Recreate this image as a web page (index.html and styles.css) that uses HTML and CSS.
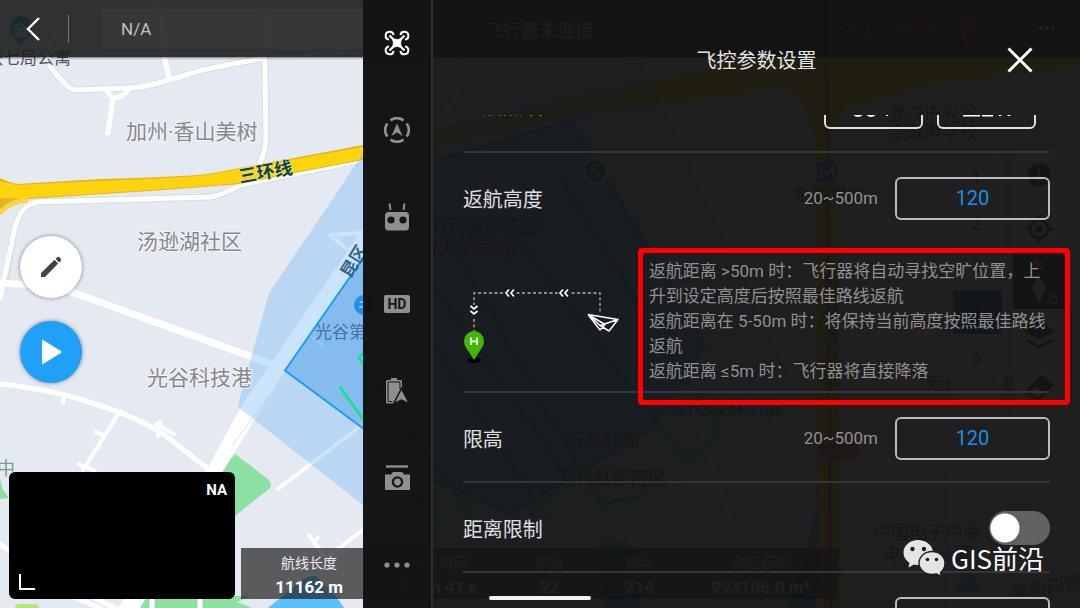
FILE: index.html
```html
<!DOCTYPE html>
<html lang="zh-CN">
<head>
<meta charset="utf-8">
<meta name="viewport" content="width=device-width, initial-scale=1">
<title>飞控参数设置</title>
<link rel="stylesheet" href="styles.css">
</head>
<body>
<div class="app">
  <svg class="map" viewBox="0 0 1080 608" preserveAspectRatio="xMinYMin slice" aria-hidden="true">
    <rect width="1080" height="608" fill="#e5eaf2"/>
    <!-- parks and water -->
    <g fill="#8ce0a3">
      <path d="M235 454L268 479Q272 484 270 488L235 516L205 490Z"/>
      <path d="M0 478L3 490L9 498L0 499Z"/>
      <path d="M125 608L140 596H250L225 608Z"/>
      <path d="M205 596Q225 600 240 603L252 608H215Z"/>
    </g>
    <path d="M268 608L302 580Q315 571 321 581L336 596L344 608Z" fill="#5ac0ff"/>
    <path d="M597 545Q618 535 640 550V608H605Z M816 485H825L822 550L815 608H785Q812 560 816 485Z M952 590L970 570L982 592L955 592Z" fill="#5ac0ff"/>
    <rect x="15" y="604" width="24" height="10" rx="4" fill="#b3e580"/>
    <!-- minor roads -->
    <g fill="none" stroke="#d8dce3" stroke-width="7" stroke-linecap="round" stroke-linejoin="round">
      <path d="M61 0L48 58Q50 68 56 74L66 85Q71 90 78 90L130 88Q150 86 169 80L202 70L264 58"/>
      <path d="M264 0L266 140Q264 156 260 162"/>
      <path d="M5 285L12 242Q17 204 38 202L210 197Q224 195 240 185L363 160"/>
    </g>
    <g fill="none" stroke="#fff" stroke-linecap="round" stroke-linejoin="round" stroke-width="5">
      <path d="M61 0L48 58Q50 68 56 74L66 85Q71 90 78 90L130 88Q150 86 169 80L202 70L264 58"/>
      <path d="M155 0Q161 8 161 25L165 60L169 78"/>
      <path d="M264 0L266 140Q264 156 260 162"/>
      <path d="M106 90L113 99L110 118L108 133M128 90Q124 97 113 99"/>
      <path d="M0 15Q35 3 68 0M265 56L363 53" stroke-width="2"/>
      <path d="M0 298L12 242Q17 204 38 202L210 197Q224 195 240 185L363 160"/>
      <path d="M0 283L55 286L94 300L272 364" stroke-width="7"/>
      <path d="M0 384Q55 390 92 403Q150 420 180 447L207 468"/>
      <path d="M64 394L63 403M120 411L83 470M96 432L103 435M79 464L95 471M160 422L158 436M156 424L174 434M98 448L99 446" stroke-width="4"/>
      <path d="M278 489L363 424M309 535L333 568M318 537L314 543M330 555L363 530" stroke-width="4"/>
      <path d="M0 544L12 553M72 596L100 608M90 596L115 608M152 596V608M200 596V608" stroke-width="5"/>
      <path d="M330 235L363 233M330 235L347 249M313 337L322 345" stroke-width="4"/>
      <path d="M466 0L460 80Q455 110 430 125M430 225Q500 300 560 270T650 240M430 410Q520 380 540 470M530 560Q600 520 700 525T860 475L1080 465M700 430L730 520M1000 150L1005 350M840 300L1000 285M950 475V608" stroke="#fff"/>
    </g>
    <!-- ring road -->
    <path d="M363 228L345 255L280 350L242 405L205 473L118 608H140L228 463L267 400L285 371L363 262Z" fill="#fff"/>
    <path d="M268 397L232 446" stroke="#dfe3ea" fill="none"/>
    <path d="M0 178Q8 182 17 184L100 179Q180 177 208 174L240 168L363 145L430 131L600 92L700 70L755 57H1080V66L930 85L850 108Q835 112 835 125L842 608H820L815 150Q808 90 780 88L700 100L560 118L430 147L363 160L300 172L240 184Q180 189 150 191L28 199Q10 203 0 215V205Z" fill="#e4b521"/>
    <path d="M0 181L17 185L100 181Q180 178 208 175L240 169L363 147L430 132L600 94L700 72L755 58H1080V65L930 84L850 107Q834 111 834 125L841 608H821L816 150Q808 89 780 87L700 99L560 117L430 146L363 159L300 171L240 183Q180 188 150 190L28 198L0 198Z" fill="#ffd30d"/>
    <path d="M0 213Q10 201 28 200" stroke="#f9d44a" stroke-width="5" fill="none"/>
    <path d="M826 0L831 608" stroke="#93619d" stroke-width="3"/>
    <!-- survey area -->
    <path d="M363 153L332 200L269 293L240 398L238 407L363 505L520 608L800 400L640 57Z" fill="#6cb5f5" fill-opacity=".36"/>
    <path d="M285 370.500L430 162L572 120L705 345L650 430L510 515L430 478Z" fill="#3b98ec" fill-opacity=".42" stroke="#1d9cf5" stroke-width="2"/>
    <path d="M340 387L363 419L440 525M364 352L359 358L480 530M430 280L570 480L530 515M430 205L600 505L645 495M480 190L690 465M560 180L720 430L690 460M430 340L550 520" stroke="#0ee28a" stroke-width="2.500" fill="none"/>
    <circle cx="595" cy="171" r="12" fill="#0aa861" stroke="#d8f1cf" stroke-width="3"/>
    <path d="M599 167Q595 164 592 167Q592 170 595 171Q599 172 599 175Q595 178 591 175" fill="none" stroke="#d8f1cf" stroke-width="2"/>
    <circle cx="364" cy="305" r="10" fill="#1d92ee"/>
    <path d="M360 302H364M359 307H364" stroke="#e5f4ff"/>
    <!-- place names -->
    <g class="place">
      <text x="126" y="139">加州·香山美树</text>
      <text x="137" y="249">汤逊湖社区</text>
      <text x="147" y="385">光谷科技港</text>
    </g>
    <g class="poi">
      <text class="poi-small" x="-14" y="64">铁七局公寓</text>
      <text class="poi-school" x="315" y="338">光谷第</text>
      <text class="poi-green" x="-3" y="475">中</text>
      <text class="road-name" transform="translate(240 183) rotate(-10)">三环线</text>
      <text class="road-blue" transform="translate(350 279) rotate(-58)">昆区</text>
      <text x="888" y="121">武汉市光谷</text><text x="888" y="139">金融港学校</text>
      <text x="793" y="201">金融港北</text><text x="430" y="233">万科城市花园</text>
      <text x="432" y="255">(大学园路)</text><text x="668" y="415">现代·森林小镇</text>
      <text x="567" y="447">万科红郡</text><text x="558" y="485">万科红郡南区</text>
      <text x="873" y="539">中国电子中原</text><text x="883" y="561">电子产业园</text>
      <text x="926" y="389">光谷金融港</text>
      <text transform="translate(1012 600) rotate(-10)">高新四路</text>
      <text x="822" y="294">光</text><text x="822" y="319">谷</text><text x="822" y="346">道</text><text x="822" y="367">高</text><text x="822" y="388">架</text>
    </g>
    <rect x="817" y="162" width="20" height="20" rx="5" fill="#2f6cd8"/>
    <path d="M821 178V167L827 174L833 167V178" fill="none" stroke="#fff" stroke-width="2"/>
    <rect x="816" y="444" width="44" height="15" rx="7" fill="#d85a68"/>
    <path d="M10 27a11 11 0 1 1 22 0q0 9-11 18q-11-9-11-18Z" fill="#07aebb"/>
    <path d="M14 28L20 23L26 28M16 28V34H25V28M19 34V29H22V34M27 30V34M14 36H28" fill="none" stroke="#fff" stroke-width="1.500"/>
    <!-- map tools -->
    <rect x="953" y="155" width="49" height="260" rx="4" fill="#f7f7f7" fill-opacity=".8"/>
    <rect x="953" y="290" width="49" height="44" fill="#2e62c0"/>
    <rect x="1013" y="150" width="53" height="265" rx="4" fill="#f7f7f7" fill-opacity=".8"/>
    <rect x="1013" y="255" width="53" height="54" fill="#333"/>
    <g fill="none" stroke="#333" stroke-width="3">
      <circle cx="1039" cy="175" r="10" fill="#333"/>
      <path d="M1039 169V171M1039 173V181" stroke="#fff"/>
      <circle cx="1039" cy="229" r="9"/><path d="M1039 215V220M1039 238V243M1025 229H1030M1048 229H1053"/><circle cx="1039" cy="229" r="2"/>
      <path d="M1027 331L1039 323L1052 331L1039 338Z" fill="#333"/><path d="M1027 340L1039 347L1052 340"/>
      <path d="M1027 392L1041 377L1052 385L1039 400Z"/><path d="M1034 384L1041 377L1052 385L1046 392Z" fill="#333"/>
      <path d="M1039 274L1046 288L1039 303L1032 288Z" fill="#fff" stroke="none"/>
      <path d="M1050 297H1057V303H1050ZM1051 297V293H1056V297" stroke="#ffd30d" stroke-width="1.500"/>
    </g>
    <g class="tool-num"><text x="971" y="184">1</text><text x="971" y="230">2</text><text x="971" y="273">3</text><text x="971" y="318">4</text><text x="971" y="364">5</text></g>
    <text class="north" x="1034" y="270">N</text>
  </svg>

  <main class="flight">
    <header class="topbar">
      <button class="back" aria-label="返回">
        <svg viewBox="0 0 16 26" width="16" height="26"><path d="M15 2L4 13L15 24" fill="none" stroke="#fff" stroke-width="2.400"/></svg>
      </button>
      <span class="bar-line"></span>
      <div class="mode">N/A</div>
      <div class="conn">飞行器未连接</div>
      <div class="signals">
        <span>✕ 0</span><span>RC ✕</span>
        <svg viewBox="0 0 16 28" width="16" height="28"><path d="M2 4H14V26H2ZM5 2H11M2 18L14 12" fill="none" stroke="#ff2d2d" stroke-width="2"/></svg>
      </div>
      <span class="more">•••</span>
    </header>
    <div class="actions">
      <button class="round round-edit" aria-label="编辑">
        <svg viewBox="0 0 24 24" width="24" height="24"><path d="M2 18L15.500 4.800L19.200 8.500L6 22H2ZM16.500 3.800L18 2.400Q19.400 1.200 20.800 2.600L21.600 3.400Q22.800 4.800 21.600 6L20.200 7.500Z" fill="#444"/></svg>
      </button>
      <button class="round round-play" aria-label="开始">
        <svg viewBox="0 0 24 26" width="24" height="26"><path d="M3 1.500Q3 .5 4 1L22 12Q23 13 22 14L4 25Q3 25.500 3 24.500Z" fill="#fff"/></svg>
      </button>
    </div>
    <div class="bottom">
      <section class="video">
        <span class="video-state">NA</span>
        <svg viewBox="0 0 16 16" width="16" height="16"><path d="M1 0V15H16" fill="none" stroke="#fff" stroke-width="2"/></svg>
      </section>
      <dl class="stats">
        <div><dt>航线长度</dt><dd>11162 m</dd></div>
        <div><dt>预计时间</dt><dd>25 m 41 s</dd></div>
        <div><dt>航点</dt><dd>22</dd></div>
        <div><dt>照片</dt><dd>214</dd></div>
        <div><dt>测区面积</dt><dd>993106.0 m²</dd></div>
      </dl>
    </div>
  </main>

  <aside class="drawer">
    <nav class="tabs">
      <button class="tab tab-on" aria-label="飞控参数设置">
        <svg viewBox="0 0 26 26" width="26" height="26" fill="none" stroke="currentColor">
          <path d="M5 9.600A4 4 0 1 1 9.600 5M21 9.600A4 4 0 1 0 16.400 5M5 16.400A4 4 0 1 0 9.600 21M21 16.400A4 4 0 1 1 16.400 21" stroke-width="2"/>
          <path d="M5.500 5.500L20.500 20.500M20.500 5.500L5.500 20.500" stroke-width="2.200"/>
          <path d="M8.500 8.500Q13 11 17.500 8.500Q15.500 13 17.500 17.500Q13 15 8.500 17.500Q10.500 13 8.500 8.500Z" fill="currentColor"/>
        </svg>
      </button>
      <button class="tab" aria-label="导航">
        <svg viewBox="0 0 26 26" width="26" height="26" fill="none" stroke="currentColor" stroke-width="2.600">
          <path d="M6.500 3.300A11.600 11.600 0 0 1 19.500 3.300M22.700 6.500A11.600 11.600 0 0 1 22.700 19.500M19.500 22.700A11.600 11.600 0 0 1 6.500 22.700M3.300 19.500A11.600 11.600 0 0 1 3.300 6.500"/>
          <path d="M13 6.500L18.500 19L13 15.500L7.500 19Z" fill="currentColor" stroke="none"/>
        </svg>
      </button>
      <button class="tab" aria-label="遥控器">
        <svg viewBox="0 0 26 28" width="26" height="28">
          <path d="M5.500 .5L6.500 7M20.500 .5L19.500 7" stroke="currentColor" stroke-width="2" fill="none"/>
          <path d="M4.500 9H21.500Q25 9 25 12.500V24Q25 27.500 21.500 27.500H4.500Q1 27.500 1 24V12.500Q1 9 4.500 9Z" fill="currentColor"/>
          <circle cx="7" cy="17" r="3.600" fill="#161616"/><circle cx="19" cy="17" r="3.600" fill="#161616"/>
        </svg>
      </button>
      <button class="tab" aria-label="图传"><span class="hd">HD</span></button>
      <button class="tab" aria-label="电池">
        <svg viewBox="0 0 26 26" width="26" height="26">
          <path d="M7 0H13V2H16.500Q18 2 18 3.500V11L10 25.500H3.500Q2 25.500 2 24V3.500Q2 2 3.500 2H7Z" fill="currentColor"/>
          <path d="M16 11V4H4V23.500H8.500" fill="none" stroke="#161616" stroke-width="1"/>
          <path d="M17.500 10.500L25.500 26L17.500 22L9.500 26Z" fill="currentColor" stroke="#161616" stroke-width="1.500"/>
        </svg>
      </button>
      <button class="tab" aria-label="相机">
        <svg viewBox="0 0 26 26" width="26" height="26">
          <path d="M2 1.500H24" stroke="currentColor" stroke-width="2.400"/>
          <path d="M1 9.500H7L9 7H18L20 9.500H26V25H1Z" fill="currentColor"/>
          <circle cx="13.500" cy="17" r="4.600" fill="none" stroke="#161616" stroke-width="2.400"/>
        </svg>
      </button>
      <button class="tab" aria-label="更多">
        <svg viewBox="0 0 26 6" width="26" height="6" fill="currentColor"><circle cx="3" cy="3" r="2.600"/><circle cx="13" cy="3" r="2.600"/><circle cx="23" cy="3" r="2.600"/></svg>
      </button>
    </nav>

    <section class="settings">
      <header class="settings-head">
        <h1>飞控参数设置</h1>
        <button class="close" aria-label="关闭">
          <svg viewBox="0 0 26 26" width="26" height="26"><path d="M1.500 1.500L24.500 24.500M24.500 1.500L1.500 24.500" stroke="#fff" stroke-width="3"/></svg>
        </button>
      </header>
      <div class="scroll">
        <div class="row row-top">
          <span class="label">返航点设置</span>
          <div class="choices">
            <button class="choice" aria-label="飞行器位置">
              <svg viewBox="0 0 44 24" width="44" height="24" fill="none" stroke="#fff" stroke-width="2"><circle cx="6" cy="17" r="5"/><circle cx="19" cy="17" r="5"/><path d="M35 4V22"/></svg>
            </button>
            <button class="choice" aria-label="遥控器位置">
              <svg viewBox="0 0 48 24" width="48" height="24" fill="none" stroke="#fff" stroke-width="3"><path d="M0 21H17M19 21H30M8 4V21M37 4V22M46 4V22"/></svg>
            </button>
          </div>
        </div>
        <div class="row row-open">
          <label class="label" for="rth">返航高度</label>
          <span class="hint">20~500m</span>
          <input class="num" id="rth" type="text" value="120">
        </div>
        <div class="detail">
          <svg class="route" viewBox="0 0 156 78" width="156" height="78" fill="none">
            <ellipse cx="11" cy="73" rx="7" ry="3" fill="#000"/>
            <path d="M11 46V6H137V26" stroke="#b5b5b5" stroke-width="1.300" stroke-dasharray="3 2.500"/>
            <path d="M42 6H52M96 6H106M11 18V30" stroke="#1b1f21" stroke-width="5"/>
            <path d="M46 2.500L43 6L46 9.500M51 2.500L48 6L51 9.500M100 2.500L97 6L100 9.500M105 2.500L102 6L105 9.500M7.500 19L11 22L14.500 19M7.500 24L11 27L14.500 24" stroke="#fff" stroke-width="1.700"/>
            <path d="M1 54a10 10 0 1 1 20 0q0 5-5 11L11 73L6 65Q1 59 1 54Z" fill="#43b608"/>
            <path d="M8 50.500V58M14 50.500V58M8 54.300H14" stroke="#fff" stroke-width="1.800"/>
            <path d="M125 27.500L155 32.500L146 44L137 38.500M125 27.500L137 43L142 37.500M125 27.500L137 38.500L155 32.500M125 27.500L142 37.500" stroke="#fff" stroke-width="1.500" stroke-linejoin="round"/>
          </svg>
          <div class="note">
            <p>返航距离 &gt;50m 时：飞行器将自动寻找空旷位置，上升到设定高度后按照最佳路线返航</p>
            <p>返航距离在 5-50m 时：将保持当前高度按照最佳路线返航</p>
            <p>返航距离 ≤5m 时：飞行器将直接降落</p>
          </div>
        </div>
        <div class="row">
          <label class="label" for="limit">限高</label>
          <span class="hint">20~500m</span>
          <input class="num" id="limit" type="text" value="120">
        </div>
        <div class="row">
          <label class="label" for="dist">距离限制</label>
          <input class="switch" id="dist" type="checkbox">
        </div>
        <div class="row">
          <input class="num" type="text" aria-label="最大距离">
        </div>
      </div>
    </section>
  </aside>

  <div class="home-bar"></div>
  <div class="watermark">
    <svg viewBox="0 0 42 38" width="42" height="38">
      <path d="M15 1C7 1 .5 6.500 .5 13.500C.5 18 3 21.500 6.500 23.800L5.500 28.500L11 25.500Q13 26 15 26C23 26 30 20.500 30 13.500S23 1 15 1Z" fill="#e4e4e4"/>
      <path d="M29 12.500C21.500 12.500 16 18 16 24S21.500 35.500 29 35.500Q31.500 35.500 33.500 35L38.500 37.500L37.500 33.500Q42 30 42 24C42 18 36.500 12.500 29 12.500Z" fill="#e4e4e4" stroke="#1e2020" stroke-width="1.400"/>
      <g fill="#1e2020"><circle cx="9.500" cy="10" r="2.200"/><circle cx="21" cy="10" r="2.200"/><circle cx="24.500" cy="20.500" r="1.800"/><circle cx="33.500" cy="20.500" r="1.800"/></g>
    </svg>
    <span>GIS前沿</span>
  </div>
</div>
</body>
</html>
```
FILE: styles.css
```css
* { box-sizing: border-box; }

body {
  margin: 0;
  background: #1e2020;
  color: #e6e6e6;
  font-family: Roboto, "Noto Sans CJK SC", sans-serif;
}

button, input { font: inherit; color: inherit; }
button { padding: 0; border: 0; background: none; cursor: pointer; }
svg { display: block; }

.app { position: relative; height: 100vh; overflow: hidden; }

/* map */
.map { position: absolute; inset: 0; width: 100%; height: 100%; }
.place { font-size: 21px; fill: #85888c; stroke: #f3f5f8; stroke-width: 2px; paint-order: stroke; }
.poi { font-size: 18px; fill: #4b5262; }
.poi-small { font-size: 17px; }
.poi-school { font-size: 17px; fill: #49709f; }
.poi-green { fill: #779a92; }
.road-name { font-weight: 700; fill: #0c4347; stroke: #f3e7a4; stroke-width: 1px; paint-order: stroke; }
.road-blue { font-size: 17px; font-weight: 700; fill: #2f648c; }
.tool-num { font-size: 18px; fill: #333; }
.north { font-size: 14px; fill: #fff; }

/* flight view */
.flight { position: relative; display: flex; flex-direction: column; height: 100%; }
.topbar {
  display: flex;
  align-items: center;
  height: 57px;
  padding: 0 24px;
  background: rgba(28, 29, 30, .9);
  box-shadow: 0 1px 2px rgba(0, 0, 0, .5);
}
.bar-line { width: 1px; height: 28px; margin-left: 28px; background: #777; }
.mode {
  width: 366px;
  height: 40px;
  margin-left: 33px;
  padding-left: 19px;
  background: rgba(255, 255, 255, .03);
  color: #c2c2c2;
  font-size: 17px;
  line-height: 40px;
}
.conn { margin-left: 17px; font-size: 18px; color: #ddd; }
.signals { display: flex; align-items: center; gap: 28px; margin-left: auto; color: #ff2d2d; font-size: 16px; }
.more { margin-left: 60px; font-size: 18px; }

.actions { display: flex; flex-direction: column; gap: 23px; padding: 179px 20px 0; }
.round {
  display: grid;
  place-items: center;
  width: 62px;
  height: 62px;
  border-radius: 50%;
  box-shadow: 0 0 4px rgba(0, 0, 0, .45);
}
.round-edit { background: #fff; }
.round-play { background: #20a0f8; }

.bottom { display: flex; align-items: flex-end; gap: 6px; margin-top: auto; padding: 0 9px 9px; }
.video {
  display: flex;
  flex-direction: column;
  justify-content: space-between;
  width: 226px;
  height: 127px;
  padding: 8px 8px 9px 10px;
  border-radius: 6px;
  background: #000;
}
.video-state { align-self: flex-end; color: #fff; font-size: 15px; font-weight: 700; line-height: 20px; }
.stats {
  display: grid;
  grid-template-columns: 136px 125px 95px 85px 157px;
  margin: 0;
  background: rgba(30, 30, 30, .7);
  text-align: center;
}
.stats div { padding: 3px 0 0; }
.stats dt { color: #ececec; font-size: 14px; line-height: 24px; }
.stats dd { margin: 0; color: #fff; font-size: 17px; font-weight: 700; line-height: 24px; }

/* settings drawer */
.drawer {
  position: absolute;
  inset: 0 0 0 33.6%;
  display: flex;
  background: rgba(18, 18, 18, .94);
}
.tabs {
  display: grid;
  grid-template-rows: repeat(7, 1fr);
  flex: none;
  width: 70px;
  border-right: 2px solid #2b2d2e;
  background: rgba(20, 20, 20, .85);
}
.tab { display: grid; place-items: center; color: #8f8f8f; }
.tab-on { color: #fff; }
.hd {
  width: 26px;
  border-radius: 2px;
  background: #8f8f8f;
  color: #161616;
  font-size: 14px;
  font-weight: 700;
  line-height: 18px;
  text-align: center;
}

.settings { display: flex; flex: 1; flex-direction: column; min-width: 0; }
.settings-head { position: relative; flex: none; height: 115px; padding: 46px 0 0; text-align: center; }
.settings-head h1 { margin: 0; color: #e4e4e4; font-size: 20px; font-weight: 400; line-height: 30px; }
.close { position: absolute; top: 47px; right: 47px; }

.scroll { flex: 1; min-height: 0; overflow: hidden; padding: 0 30px; }
.row {
  display: flex;
  align-items: center;
  height: 90px;
  padding-top: 2px;
  border-bottom: 2px solid #343637;
}
.row-top { margin-top: -52px; padding-right: 14px; }
.row-top .label { padding-bottom: 6px; }
.row-open { border-color: transparent; }
.label { margin-right: auto; color: #e0e0e0; font-size: 20px; }
.hint { margin-right: 17px; color: #8f9090; font-size: 17px; }
.num {
  width: 155px;
  height: 43px;
  margin-left: auto;
  padding: 0;
  border: 2px solid #bcbcbc;
  border-radius: 6px;
  background: none;
  color: #1c8fe4;
  font-size: 20px;
  text-align: center;
}
.hint + .num { margin-left: 0; }
.choices { display: flex; gap: 14px; }
.choice {
  display: grid;
  place-items: center;
  width: 99px;
  height: 42px;
  padding-bottom: 5px;
  border: 2px solid #e0e0e0;
  border-radius: 6px;
}
.switch {
  appearance: none;
  width: 61px;
  height: 34px;
  margin: 0;
  border-radius: 17px;
  background: radial-gradient(circle at 16px 50%, #fff 14px, transparent 15px) #616262;
}

.detail {
  display: flex;
  align-items: flex-start;
  gap: 19px;
  height: 150px;
  border-bottom: 2px solid #343637;
}
.route { flex: none; margin-top: 44px; }
.note {
  flex: 1;
  margin: 5px -20px 0 0;
  padding: 6px 16px 16px 6px;
  border: 5px solid #fe0000;
  border-radius: 4px;
  color: #8f9090;
  font-size: 17px;
  line-height: 25px;
}
.note p { margin: 0; }

/* overlays */
.home-bar {
  position: absolute;
  right: 0;
  bottom: 8px;
  left: 0;
  width: 102px;
  height: 4px;
  margin: 0 auto;
  border-radius: 2px;
  background: #f2f2f2;
}
.watermark {
  position: absolute;
  right: 36px;
  bottom: 31px;
  display: flex;
  align-items: center;
  gap: 6px;
  color: #fff;
  font-family: "Noto Sans CJK SC", sans-serif;
  font-size: 26px;
  line-height: 38px;
}
```
